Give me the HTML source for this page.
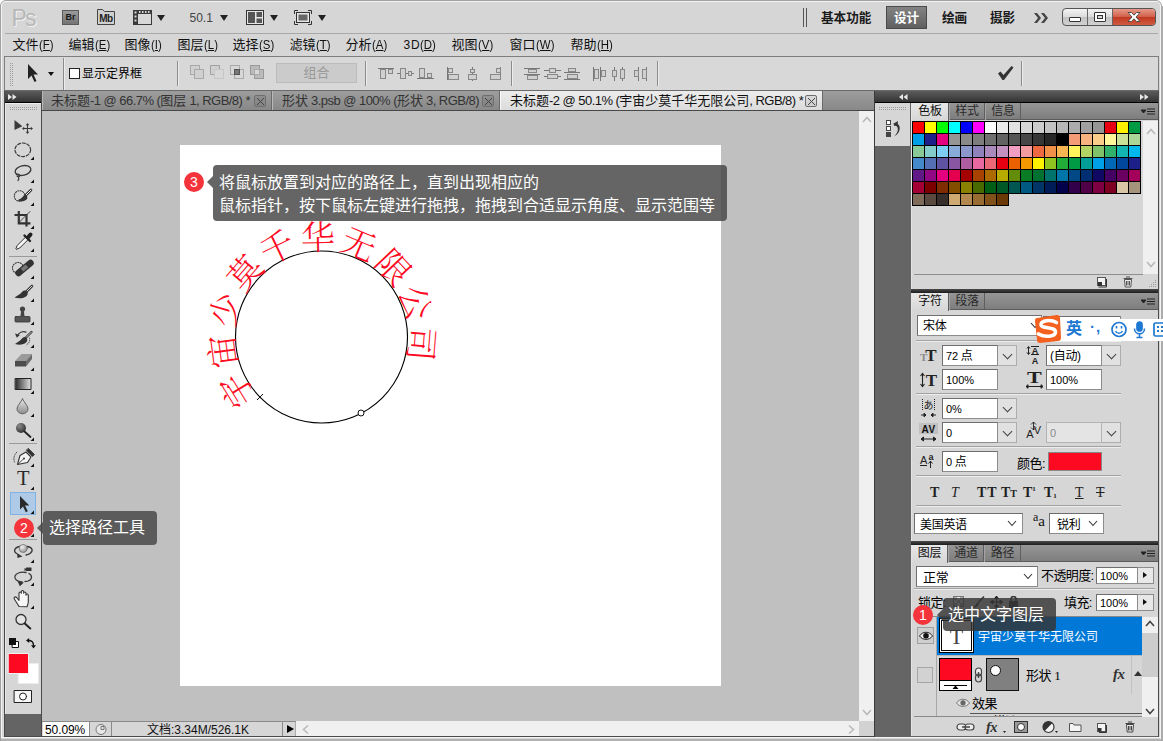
<!DOCTYPE html>
<html lang="zh-CN">
<head>
<meta charset="utf-8">
<title>Photoshop</title>
<style>
*{box-sizing:border-box;margin:0;padding:0}
html,body{width:1163px;height:741px;overflow:hidden;background:#d6d6d6}
body{font-family:"Liberation Sans","Noto Sans CJK SC",sans-serif;font-size:12px;color:#000;position:relative}
.abs{position:absolute}
#root{position:absolute;left:0;top:0;width:1163px;height:741px;overflow:hidden;background:#d6d6d6}
#appbar{left:0;top:0;width:1163px;height:33px}
.tri{position:absolute;width:0;height:0;border:4px solid transparent;border-top:6px solid #222;border-bottom:0}
.ws{position:absolute;top:8.500px;font-size:12.600px;font-weight:bold;line-height:18px;color:#1a1a1a;white-space:nowrap;letter-spacing:0}
#menubar{left:5px;top:33px;width:1153px;height:23px;border-top:1px solid #a8a8a8}
.menu{position:absolute;top:2px;font-size:13px;line-height:18px;color:#111;white-space:nowrap}
.menu u{text-decoration:underline}
.menu b{font-weight:normal;display:inline-block;transform:scaleX(0.880);transform-origin:left center;margin-right:-2px}
#menubar .menu{margin-left:-5.500px}
#optbar{left:4px;top:56px;width:1155px;height:35px;background:#d8d8d8;border:1px solid #7e7e7e;border-bottom:1px solid #6a6a6a}
.vsep{position:absolute;width:2px;border-left:1px solid #8c8c8c;border-right:1px solid #ececec}
.grip{background:linear-gradient(90deg,#9a9a9a 50%,transparent 50%) 0 0/2px 2px;-webkit-mask:linear-gradient(#000 50%,transparent 50%) 0 0/2px 2px;mask:linear-gradient(#000 50%,transparent 50%) 0 0/2px 2px}
.tab{position:absolute;top:0;height:19px;border-right:1px solid #6a6a6a;border-left:1px solid #b8b8b8;font-size:13px;color:#333;white-space:nowrap}
.tab span{position:absolute;top:0;line-height:19px;letter-spacing:-0.54px}
.tab em{font-style:normal;letter-spacing:0}
.tab i{position:absolute;top:4px;width:12px;height:12px;border:1px solid #6e6e6e;border-radius:2px;background-color:rgba(0,0,0,0.060);background-image:
 linear-gradient(45deg,transparent 44%,#444 44%,#444 56%,transparent 56%),linear-gradient(-45deg,transparent 44%,#444 44%,#444 56%,transparent 56%);background-size:7px 7px;background-position:center;background-repeat:no-repeat}
.tab.act{background:linear-gradient(#ececec,#dcdcdc);height:19px;color:#111;border-left:1px solid #f8f8f8}
.panel{background:#d6d6d6;border-left:1px solid #e6e6e6}
.ptabs{position:absolute;left:0;top:0;right:0;height:17px;background:linear-gradient(#969696,#7e7e7e);border-bottom:1px solid #5c5c5c}
.ptab{position:absolute;top:0;height:17px;font-size:12px;line-height:17px;text-align:center;color:#2a2a2a;border-right:1px solid #5e5e5e;border-left:1px solid #a4a4a4;letter-spacing:-0.3px;white-space:nowrap}
.ptab.act{background:linear-gradient(#e8e8e8,#d6d6d6);height:18px;color:#111;border-left:0}
.fld{position:absolute;background:#fff;border:1px solid #8c8c8c;border-top-color:#6e6e6e;border-left-color:#6e6e6e;font-size:12px;color:#000;white-space:nowrap}
.fld span{position:absolute;top:1px;line-height:19px;letter-spacing:-0.3px}
.fld b{font-weight:normal;font-size:11px;letter-spacing:0;word-spacing:-0.500px}
.fld.dis{background:#e4e4e4;color:#8a8a8a;border-color:#b4b4b4}
.dd{position:absolute;width:19px;height:21px;background:#e1e1e1;border:1px solid #adadad;border-left:0}
.dd:after{content:"";position:absolute;left:6px;top:5px;width:6px;height:6px;border-right:1px solid #444;border-bottom:1px solid #444;transform:rotate(45deg) scale(1,1);transform-origin:center}
.hsep{position:absolute;height:2px;border-top:1px solid #a2a2a2;border-bottom:1px solid #ededed}
.tsty{top:192px;font-family:"Liberation Serif",serif;font-size:14px;line-height:16px;color:#222;white-space:nowrap}
.abtn{position:absolute;width:16px;height:17px;background:#e8e8e8;border:1px solid #8c8c8c;border-left:0}
.abtn:after{content:"";position:absolute;left:5px;top:4px;width:0;height:0;border:3.500px solid transparent;border-left:4.500px solid #111;border-right:0}
.tip{position:absolute;background:rgba(72,72,72,0.840);color:#fff;font-size:16px;border-radius:4px;white-space:nowrap}
.tiparrow{position:absolute;width:0;height:0;border:6px solid transparent;border-right:6px solid rgba(72,72,72,0.840);border-left:0}
.badge{position:absolute;width:20px;height:20px;border-radius:50%;background:#f5333b;color:#fff;font-size:14px;line-height:20px;text-align:center}
</style>
</head>
<body>
<div id="root">
<!-- ===== APP BAR ===== -->
<div class="abs" id="appbar">
  <div class="abs" style="left:11.500px;top:3.500px;font-size:23px;letter-spacing:-1.800px;color:#b8b8b8;text-shadow:1px 1px 0 #f2f2f2;font-family:'Liberation Sans',sans-serif;line-height:28px">Ps</div>
  <!-- Br -->
  <div class="abs" style="left:62px;top:10px;width:17px;height:15px;background:linear-gradient(#9a9a9a,#747474);border:1px solid #5a5a5a;color:#1a1a1a;font-size:9px;font-weight:bold;line-height:13px;text-align:center">Br</div>
  <!-- Mb -->
  <svg class="abs" style="left:96px;top:8px" width="20" height="18" viewBox="0 0 20 18"><path d="M1.5 16.5V1.5H6.5L8.5 3.5H18.5V16.5Z" fill="#d0d0d0" stroke="#444" stroke-width="1"/><text x="10" y="14" font-size="10" font-weight="bold" letter-spacing="-0.5" text-anchor="middle" fill="#222" font-family="Liberation Sans, sans-serif">Mb</text></svg>
  <!-- film -->
  <svg class="abs" style="left:132px;top:9px" width="21" height="17" viewBox="0 0 21 17"><rect x="1" y="1" width="19" height="15" fill="#3a3a3a"/><rect x="6" y="5" width="13" height="10" fill="#d8d8d8"/><g fill="#d8d8d8"><rect x="2.5" y="2.5" width="2" height="2"/><rect x="2.5" y="6.5" width="2" height="2"/><rect x="2.5" y="10.5" width="2" height="2"/><rect x="7" y="2" width="1.5" height="2"/><rect x="10" y="2" width="1.5" height="2"/><rect x="13" y="2" width="1.5" height="2"/><rect x="16" y="2" width="1.5" height="2"/></g></svg>
  <div class="tri" style="left:157px;top:15px"></div>
  <div class="abs" style="left:189.500px;top:11px;font-size:12px;color:#444;line-height:15px">50.1</div>
  <div class="tri" style="left:220px;top:15px"></div>
  <!-- layout icon -->
  <svg class="abs" style="left:245px;top:9px" width="20" height="17" viewBox="0 0 20 17"><rect x="1.5" y="1.5" width="17" height="14" fill="#e6e6e6" stroke="#333"/><rect x="3" y="3" width="7" height="11" fill="#555"/><rect x="11.5" y="3" width="5.5" height="5" fill="#555"/><rect x="11.5" y="9.5" width="5.5" height="4.5" fill="#555"/></svg>
  <div class="tri" style="left:270px;top:15px"></div>
  <!-- screen icon -->
  <svg class="abs" style="left:293px;top:9px" width="20" height="17" viewBox="0 0 20 17"><path d="M1.5 5V1.5H5M15 1.5H18.5V5M18.5 12V15.5H15M5 15.5H1.5V12" fill="none" stroke="#333" stroke-width="1"/><rect x="3.5" y="3.5" width="13" height="10" fill="#e6e6e6" stroke="#333"/><rect x="5.5" y="5.5" width="9" height="6" fill="#666"/></svg>
  <div class="tri" style="left:318px;top:15px"></div>

  <div class="abs" style="left:803px;top:8px;width:1px;height:19px;background:#555"></div>
  <div class="abs" style="left:806px;top:8px;width:1px;height:19px;background:#555"></div>
  <div class="ws" style="left:821px">基本功能</div>
  <div class="abs" style="left:886px;top:6px;width:41px;height:23px;background:linear-gradient(#838383,#606060);border:1px solid #4a4a4a"></div>
  <div class="ws" style="left:894px;color:#fff">设计</div>
  <div class="ws" style="left:942px">绘画</div>
  <div class="ws" style="left:990px">摄影</div>
  <svg class="abs" style="left:1033px;top:12px" width="16" height="12" viewBox="0 0 16 12"><path d="M1 1H4L8 6L4 11H1L5 6Z M8 1H11L15 6L11 11H8L12 6Z" fill="#444"/></svg>
  <!-- window buttons -->
  <div class="abs" style="left:1062px;top:8px;width:94px;height:18px;border:1px solid #555;border-radius:4px;background:linear-gradient(#f4f4f4 0%,#dcdcdc 48%,#c2c2c2 52%,#d2d2d2 100%);overflow:hidden">
    <div class="abs" style="left:24px;top:0;width:1px;height:16px;background:#666"></div>
    <div class="abs" style="left:49px;top:0;width:43px;height:16px;border-left:1px solid #666;background:linear-gradient(#e59a8a 0%,#d2604a 48%,#c03a22 52%,#cf5a40 100%)"></div>
    <div class="abs" style="left:6px;top:8px;width:12px;height:5px;background:#fff;border:1px solid #333;border-radius:1px"></div>
    <div class="abs" style="left:31px;top:3px;width:12px;height:10px;background:#fff;border:1px solid #333;border-radius:1px"></div>
    <div class="abs" style="left:34px;top:6px;width:6px;height:4px;background:#ddd;border:1px solid #333"></div>
    <svg class="abs" style="left:63px;top:2px" width="16" height="12" viewBox="0 0 16 12"><path d="M2 1.5H5.5L8 4.2L10.5 1.5H14L10 6L14 10.5H10.5L8 7.8L5.5 10.5H2L6 6Z" fill="#fff" stroke="#444" stroke-width="0.9"/></svg>
  </div>
</div>
<!-- ===== MENU BAR ===== -->
<div class="abs" id="menubar">
  <div class="menu" style="left:13px">文件<b>(<u>F</u>)</b></div>
  <div class="menu" style="left:69px">编辑<b>(<u>E</u>)</b></div>
  <div class="menu" style="left:125px">图像<b>(<u>I</u>)</b></div>
  <div class="menu" style="left:178px">图层<b>(<u>L</u>)</b></div>
  <div class="menu" style="left:233px">选择<b>(<u>S</u>)</b></div>
  <div class="menu" style="left:290px">滤镜<b>(<u>T</u>)</b></div>
  <div class="menu" style="left:346px">分析<b>(<u>A</u>)</b></div>
  <div class="menu" style="left:404px"><b style="transform:none;margin-right:0;letter-spacing:0.800px;font-size:12px">3D</b><b>(<u>D</u>)</b></div>
  <div class="menu" style="left:452px">视图<b>(<u>V</u>)</b></div>
  <div class="menu" style="left:510px">窗口<b>(<u>W</u>)</b></div>
  <div class="menu" style="left:571px">帮助<b>(<u>H</u>)</b></div>
</div>
<!-- ===== OPTIONS BAR ===== -->
<div class="abs" id="optbar"><div class="abs" style="left:1px;top:0;width:0;height:0">
  <div class="abs grip" style="left:4px;top:6px;width:3px;height:23px"></div>
  <svg class="abs" style="left:20px;top:6px" width="14" height="20" viewBox="0 0 14 20"><path d="M2 1V16L5.5 12.5L8.5 19L10.5 18L7.5 11.5H12Z" fill="#222"/></svg>
  <div class="abs" style="left:42px;top:15px;border:3px solid transparent;border-top:4px solid #111;border-bottom:0;width:0;height:0"></div>
  <div class="vsep" style="left:57px;top:1px;height:32px"></div>
  <div class="abs" style="left:63px;top:11px;width:11px;height:11px;background:#fff;border:1px solid #222"></div>
  <div class="abs" style="left:76px;top:9px;font-size:12px;line-height:16px;color:#000;white-space:nowrap">显示定界框</div>
  <div class="vsep" style="left:171px;top:4px;height:25px"></div>
  <!-- pathfinder icons -->
  <svg class="abs" style="left:184px;top:8px" width="15" height="15" viewBox="0 0 15 15"><rect x=".5" y=".5" width="9" height="9" fill="#d0d0d0" stroke="#a8a8a8"/><rect x="4.5" y="4.5" width="9" height="9" fill="#d0d0d0" stroke="#a8a8a8"/></svg>
  <svg class="abs" style="left:204px;top:8px" width="15" height="15" viewBox="0 0 15 15"><path d="M.5 .5H9.5V4.5H4.5V9.5H.5Z" fill="#d0d0d0" stroke="#a0a0a0"/><rect x="4.5" y="4.5" width="9" height="9" fill="none" stroke="#c6c6c6"/></svg>
  <svg class="abs" style="left:224px;top:8px" width="15" height="15" viewBox="0 0 15 15"><rect x=".5" y=".5" width="9" height="9" fill="none" stroke="#aaa"/><rect x="4.5" y="4.5" width="9" height="9" fill="none" stroke="#aaa"/><rect x="4.5" y="4.5" width="5" height="5" fill="#777" stroke="#555"/></svg>
  <svg class="abs" style="left:244px;top:8px" width="15" height="15" viewBox="0 0 15 15"><rect x=".5" y=".5" width="9" height="9" fill="#bbb" stroke="#999"/><rect x="4.5" y="4.5" width="9" height="9" fill="#bbb" stroke="#999"/><rect x="4.5" y="4.5" width="5" height="5" fill="#d8d8d8" stroke="#aaa"/></svg>
  <div class="abs" style="left:270px;top:6px;width:81px;height:20px;background:#cbcbcb;border:1px solid #bcbcbc;color:#999;font-size:13px;line-height:18px;text-align:center">组合</div>
  <div class="vsep" style="left:359px;top:4px;height:25px"></div>
  <!-- align icons -->
  <svg class="abs" style="left:372px;top:10px" width="130" height="14" viewBox="0 0 130 14" fill="#d0d0d0" stroke="#888">
    <path d="M0 1.5H16" stroke="#777"/><rect x="2.500" y="2.500" width="5" height="9"/><rect x="10.500" y="2.500" width="4" height="4"/>
    <path d="M19 6.500H36" stroke="#777"/><rect x="22.500" y="1.500" width="5" height="10"/><rect x="30.500" y="4.500" width="3" height="4"/>
    <path d="M39 11.500H56" stroke="#777"/><rect x="41.500" y="1.500" width="5" height="9"/><rect x="49.500" y="6.500" width="4" height="4"/>
    <path d="M69.500 0V13" stroke="#777"/><rect x="70.500" y="1.500" width="4" height="4"/><rect x="70.500" y="7.500" width="10" height="5"/>
    <path d="M94.500 0V14" stroke="#777"/><rect x="92.500" y="2.500" width="4" height="3"/><rect x="90.500" y="7.500" width="8" height="5"/>
    <path d="M122.500 0V13" stroke="#777"/><rect x="118.500" y="1.500" width="4" height="4"/><rect x="112.500" y="7.500" width="10" height="5"/>
  </svg>
  <div class="vsep" style="left:505px;top:4px;height:25px"></div>
  <svg class="abs" style="left:518px;top:10px" width="126" height="14" viewBox="0 0 126 14" fill="#d0d0d0" stroke="#888">
    <path d="M0 1.500H16M0 7.500H16" stroke="#777"/><rect x="4.500" y="2.500" width="8" height="3"/><rect x="3.500" y="8.500" width="10" height="4"/>
    <path d="M20 3.500H37M20 9.500H37" stroke="#777"/><rect x="25.500" y="1.500" width="6" height="4"/><rect x="23.500" y="7.500" width="10" height="4"/>
    <path d="M40 5.500H56M40 12.500H56" stroke="#777"/><rect x="44.500" y="1.500" width="7" height="3"/><rect x="43.500" y="7.500" width="10" height="4"/>
    <path d="M69.500 0V14M76.500 0V14" stroke="#777"/><rect x="70.500" y="2.500" width="4" height="9"/><rect x="77.500" y="3.500" width="4" height="6"/>
    <path d="M90.500 0V14M98.500 0V14" stroke="#777"/><rect x="88.500" y="3.500" width="4" height="6"/><rect x="96.500" y="2.500" width="4" height="9"/>
    <path d="M114.500 0V14M122.500 0V14" stroke="#777"/><rect x="110.500" y="3.500" width="4" height="6"/><rect x="118.500" y="2.500" width="4" height="9"/>
  </svg>
  <div class="vsep" style="left:651px;top:4px;height:25px"></div>
  <svg class="abs" style="left:991px;top:8px" width="18" height="16" viewBox="0 0 18 16"><path d="M1 8.500L3.500 6.500L6.500 10L14.500 1L16.500 2.500L7 15H5.500Z" fill="#333"/></svg>
  <div class="vsep" style="left:1015px;top:4px;height:25px"></div>
</div></div>
<!-- ===== TOOLBAR ===== -->
<div class="abs" style="left:4px;top:91px;width:38px;height:646px;background:#646464;border-left:1px solid #4a4a4a;border-right:1px solid #4a4a4a"></div>
<div class="abs" style="left:5px;top:91px;width:36px;height:12px;background:linear-gradient(#5c5c5c,#343434);border-bottom:1px solid #000"></div>
<svg class="abs" style="left:8px;top:94px" width="9" height="6" viewBox="0 0 9 6"><path d="M0 0L4 3L0 6ZM4.500 0L8.500 3L4.500 6Z" fill="#e8e8e8"/></svg>
<div class="abs" id="toolbar" style="left:5px;top:103px;width:36px;height:611px;background:#d6d6d6;border-top:1px solid #eee;border-left:1px solid #e8e8e8">
  <div class="abs grip" style="left:4px;top:3px;width:28px;height:4px"></div>
  <div class="abs" style="left:3px;top:152px;width:28px;height:1px;background:#9a9a9a"></div>
  <div class="abs" style="left:3px;top:339px;width:28px;height:1px;background:#9a9a9a"></div>
  <div class="abs" style="left:3px;top:435px;width:28px;height:1px;background:#9a9a9a"></div>
  <div class="abs" style="left:4px;top:388px;width:26px;height:23px;background:#aecae6;border:1px solid #7fb2e6"></div>
</div>
<!-- tool icons (absolute page coords) -->
<svg class="abs" style="left:5px;top:102px" width="36" height="612" viewBox="5 102 36 612" fill="none" stroke="#3a3a3a" stroke-width="1.300" stroke-linecap="round" stroke-linejoin="round">
  <defs>
    <linearGradient id="gr1" x1="0" x2="1"><stop offset="0" stop-color="#2e2e2e"/><stop offset="1" stop-color="#e4e4e4"/></linearGradient>
    <radialGradient id="sph" cx="0.350" cy="0.300" r="0.800"><stop offset="0" stop-color="#f4f4f4"/><stop offset="1" stop-color="#8a8a8a"/></radialGradient>
    <radialGradient id="dg" cx="0.350" cy="0.300" r="0.800"><stop offset="0" stop-color="#8a8a8a"/><stop offset="1" stop-color="#2a2a2a"/></radialGradient>
    <linearGradient id="drop" x1="0" x2="0" y1="0" y2="1"><stop offset="0" stop-color="#e8e8e8"/><stop offset="1" stop-color="#8c8c8c"/></linearGradient>
  </defs>
  <g fill="#111" stroke="none"><path d="M34 160v-3.500l-3.500 3.500z M34 183v-3.500l-3.500 3.500z M34 206v-3.500l-3.500 3.500z M34 229v-3.500l-3.500 3.500z M34 252v-3.500l-3.500 3.500z M34 279v-3.500l-3.500 3.500z M34 302v-3.500l-3.500 3.500z M34 325v-3.500l-3.500 3.500z M34 348v-3.500l-3.500 3.500z M34 371v-3.500l-3.500 3.500z M34 394v-3.500l-3.500 3.500z M34 417v-3.500l-3.500 3.500z M34 441v-3.500l-3.500 3.500z M34 467v-3.500l-3.500 3.500z M34 490v-3.500l-3.500 3.500z M34 514v-3.500l-3.500 3.500z M34 537v-3.500l-3.500 3.500z M34 563v-3.500l-3.500 3.500z M34 586v-3.500l-3.500 3.500z M34 609v-3.500l-3.500 3.500z "/></g>
  <!-- move -->
  <path d="M14.500 120V130L22.300 126.300Z" fill="#3a3a3a" stroke="none"/>
  <path d="M27.500 124.500v8M23.500 128.500h8" stroke-width="1.100"/><path d="M27.500 123l-1.800 2.200h3.600zM27.500 134l-1.800-2.200h3.600zM22 128.500l2.200-1.800v3.600zM33 128.500l-2.200-1.800v3.600z" fill="#3a3a3a" stroke="none"/>
  <!-- marquee ellipse -->
  <ellipse cx="22.800" cy="149.800" rx="7.800" ry="6.800" stroke-dasharray="3 1.800" stroke-width="1.200"/>
  <!-- lasso -->
  <ellipse cx="23" cy="170.500" rx="8" ry="4.800" transform="rotate(-14 23 170.500)" stroke-width="1.400"/>
  <path d="M16.500 174.500c1.500-1 3.500 0 3 1.500c-.3 1-2 1-2.500 0M18.500 177.500c.5 1 .5 2-.5 3" stroke-width="1.200"/>
  <!-- quick select -->
  <circle cx="19.600" cy="196" r="5.300" stroke-dasharray="1.100 1.400" stroke-width="1.100"/>
  <path d="M31 190l-5 5" stroke="#333" stroke-width="2.600"/><path d="M31 190l-5 5" stroke="#f0f0f0" stroke-width="1"/>
  <path d="M17.500 200.500C19.500 199 21.500 198.500 23 196.500C24 195 25.500 194.800 26.500 195.500C28 196.800 27.500 198.800 26 200C23.500 201.800 20 201.500 17.500 200.500Z" fill="#333" stroke="none"/>
  <!-- crop -->
  <path d="M18.800 211v12.300h11.700M14.500 215h12v11.500" stroke="#333" stroke-width="2.200" stroke-linecap="butt" stroke-linejoin="miter"/><path d="M30 211.500L19.500 222" stroke-width="0.900"/>
  <!-- eyedropper -->
  <path d="M16 248.500l1.200-3l8.300-8.300l2.500 2.500l-8.300 8.300l-3 1.200z" fill="#f6f6f6" stroke="#333" stroke-width="1"/>
  <path d="M24.500 235.500l5.500 5.500" stroke="#222" stroke-width="2.400"/><path d="M28 237.500l2.500-3" stroke="#222" stroke-width="4"/>
  <!-- healing -->
  <circle cx="18" cy="268" r="5.500" stroke-dasharray="1.100 1.400" stroke-width="1.100"/>
  <path d="M18.500 273l12-10" stroke="#333" stroke-width="6.500"/><path d="M22 270l5-4" stroke="#777" stroke-width="4" stroke-linecap="butt"/>
  <!-- brush -->
  <path d="M32 286l-6 6" stroke="#333" stroke-width="2.600"/><path d="M32 286l-6 6" stroke="#eaeaea" stroke-width="0.900"/>
  <path d="M14.500 297.500C17 295.500 20 294.500 22 292C23 290.500 25 290 26.500 291C28.500 292.500 28 295 26 296.500C22.500 299 17.500 298.500 14.500 297.500Z" fill="#333" stroke="none"/>
  <!-- stamp -->
  <circle cx="22.500" cy="309" r="2.600" fill="#444" stroke="none"/><path d="M21.300 310h2.400l.8 6h-4z" fill="#444" stroke="none"/><rect x="15" y="316.500" width="15" height="5.500" rx="0.800" fill="#555" stroke="#333" stroke-width="0.800"/>
  <!-- history brush -->
  <path d="M31.500 332l-5.500 5.500" stroke="#333" stroke-width="2.400"/><path d="M31.500 332l-5.500 5.500" stroke="#eaeaea" stroke-width="0.800"/>
  <path d="M15 344C17.500 342 20 341 22 338.500C23 337 25 336.500 26.300 337.500C28 339 27.500 341.500 25.500 343C22.500 345.200 18 345 15 344Z" fill="#333" stroke="none"/>
  <path d="M17.500 335.500c1.500-3 5-4.500 8.500-3.500" stroke-width="1.300"/><path d="M15 333.500l1.800 4.200l3-2.800z" fill="#333" stroke="none"/>
  <path d="M29.500 338c.8 2.500-.5 5-2.500 6.500" stroke-dasharray="0.800 1.400" stroke-width="0.900"/>
  <!-- eraser -->
  <path d="M15 361l6.500-7h10.500l-6 7z" fill="#9a9a9a" stroke="none"/><path d="M15 361h11v5.500h-11z" fill="#4c4c4c" stroke="none"/><path d="M26 361l6-7v5l-6 7.500z" fill="#6a6a6a" stroke="none"/>
  <!-- gradient -->
  <rect x="15.500" y="378.500" width="15.500" height="11" fill="url(#gr1)" stroke="#222" stroke-width="1"/>
  <!-- blur drop -->
  <path d="M22.500 399c-2.500 4.500-5.500 7-5.500 9.800a5.500 5 0 0 0 11 0c0-2.800-3-5.300-5.500-9.800z" fill="url(#drop)" stroke="#555" stroke-width="0.900"/>
  <!-- dodge -->
  <circle cx="21" cy="428" r="5" fill="url(#dg)" stroke="none"/><path d="M24.500 431.500l6 5.500" stroke="#222" stroke-width="1.800"/>
  <!-- pen -->
  <path d="M14.500 462c-1.500-4 0-8 3-10.500" stroke-dasharray="1 1.400" stroke-width="0.900"/>
  <path d="M17.500 464.500l2.500-9l6-3.500l5 5l-3.500 5.500z" fill="#f4f4f4" stroke="#333" stroke-width="1.100"/><path d="M17.500 464.500l6-5.500" stroke-width="0.900"/><circle cx="24" cy="458.500" r="1" fill="#333" stroke="none"/>
  <path d="M26.500 450.500l6 6l2-2l-6-6z" fill="#333" stroke="#333" stroke-width="0.800"/>
  <!-- T -->
  <text x="23.200" y="485.300" font-family="Liberation Serif, serif" font-size="20.500" text-anchor="middle" fill="#2a2a2a" stroke="none">T</text>
  <!-- path selection -->
  <path d="M20 496V509.500L23 506.500L25.800 512.200L27.800 511.200L25 505.500H29.300Z" fill="#2a2a2a" stroke="none"/>
  <!-- 3D rotate -->
  <path d="M19.500 546.500c-5 1-6.500 4.500-3 7M27 546.500c5 .5 7 4 3 7c-1 .8-2.500 1.300-4 1.500" stroke-width="1.300"/>
  <circle cx="23.200" cy="548.500" r="4" fill="url(#sph)" stroke="#666" stroke-width="0.700"/>
  <path d="M22.500 556.500l-5.500-3.500l.5 5z" fill="#333" stroke="none"/>
  <!-- 3D orbit -->
  <path d="M29 573.500c3.500 2 3.500 6-1 7.500c-1 .3-2 .5-3 .5M22 582c-5-.5-8-3-7-6c1-3 6-4.500 11-3.500" stroke-width="1.300"/>
  <path d="M23.500 583.500l-5.500-3l.5 5z" fill="#333" stroke="none" transform="rotate(-20 21 582)"/>
  <rect x="26" y="567.500" width="5.500" height="3.500" rx="0.500" fill="#333" stroke="none"/><path d="M24.500 568l1.500 .8v1.500l-1.500 .8z" fill="#333" stroke="none"/>
  <!-- hand -->
  <path d="M19 606.500c-1-2-3.500-5.500-4.700-7.500c-.9-1.500 1-2.800 2.300-1.500l2.400 2.800v-7c0-1.800 2.300-1.800 2.300 0v-1.500c0-1.800 2.400-1.800 2.400 0v1.500c0-1.700 2.300-1.700 2.300 0v2c0-1.700 2.300-1.700 2.300 0v6.500c0 2-.8 3.500-1.300 5z" fill="#f6f6f6" stroke="#333" stroke-width="1.100"/>
  <!-- zoom -->
  <circle cx="21" cy="619.500" r="5" fill="#e4e4e4" stroke="#333" stroke-width="1.300"/><path d="M24.800 623.500l5.500 5" stroke="#222" stroke-width="2"/>
  <!-- default colors / swap -->
  <rect x="12.500" y="641.500" width="6" height="6" fill="#fff" stroke="#111" stroke-width="1"/><rect x="9" y="638" width="7" height="7" fill="#111" stroke="none"/>
  <path d="M28.500 640.500c3.500 0 5 1.500 5 5" stroke="#111" stroke-width="1.300"/><path d="M26 640.500l3.200-2.500v5zM33.500 648.500l-2.500-3.200h5z" fill="#111" stroke="none"/>
  <!-- bg / fg -->
  <rect x="18.500" y="663.500" width="20" height="20" fill="#fff" stroke="#ececec" stroke-width="1"/>
  <rect x="8.500" y="653.500" width="20" height="20" fill="#fd0a22" stroke="#f0f0f0" stroke-width="1"/>
  <!-- quick mask -->
  <rect x="14.500" y="690.500" width="17" height="12" fill="#f6f6f6" stroke="#222" stroke-width="1"/><circle cx="23" cy="696.500" r="3.500" fill="#fff" stroke="#222" stroke-width="1"/>
</svg>

<!-- ===== TAB BAR ===== -->
<div class="abs" id="tabbar" style="left:42px;top:91px;width:832px;height:20px;background:linear-gradient(#9d9d9d,#888888);border-bottom:1px solid #484848">
  <div class="tab" style="left:0;width:230px"><span style="left:8px"><em>未标题</em>-1 @ 66.7% (<em>图层</em> 1, RGB/8) *</span><i style="left:211px"></i></div>
  <div class="tab" style="left:230px;width:228px"><span style="left:9px"><em>形状</em> 3.psb @ 100% (<em>形状</em> 3, RGB/8)</span><i style="left:209px"></i></div>
  <div class="tab act" style="left:458px;width:323px"><span style="left:9px"><em>未标题</em>-2 @ 50.1% (<em>宇宙少莫千华无限公司</em>, RGB/8) *</span><i style="left:304px"></i></div>
</div>

<!-- ===== CANVAS ===== -->
<div class="abs" id="canvas" style="left:42px;top:111px;width:817px;height:610px;background:#c0c0c0;overflow:hidden"></div>
<div class="abs" id="doc" style="left:180px;top:145px;width:541px;height:541px;background:#fff"></div>
<svg class="abs" style="left:180px;top:145px" width="541" height="541" viewBox="180 145 541 541">
  <circle cx="321.500" cy="337" r="86" fill="none" stroke="#000" stroke-width="1.150"/>
  <path id="tp" d="M 259.950 397.060 A 86 86 0 1 1 321.500 423 A 86 86 0 0 1 259.950 397.060" fill="none"/>
  <text font-family="'Liberation Serif','Noto Serif CJK SC',serif" font-size="34" font-weight="300" letter-spacing="2" fill="#fd0a22"><textPath href="#tp" startOffset="1"><tspan dy="-1.500">宇宙少莫千华无限公司</tspan></textPath></text>
  <path d="M257 394l6 6M263 394l-6 6" stroke="#111" stroke-width="1"/>
  <circle cx="361" cy="413" r="3" fill="#fff" stroke="#111" stroke-width="1"/>
</svg>
<!-- vertical scrollbar -->
<div class="abs" style="left:859px;top:111px;width:15px;height:610px;background:#f0f0f0"></div>
<svg class="abs" style="left:862px;top:116px" width="10" height="7" viewBox="0 0 10 7"><path d="M1 6L5 1.500L9 6" fill="none" stroke="#b8b8b8" stroke-width="1.500"/></svg>
<svg class="abs" style="left:862px;top:709px" width="10" height="7" viewBox="0 0 10 7"><path d="M1 1L5 5.500L9 1" fill="none" stroke="#b8b8b8" stroke-width="1.500"/></svg>
<!-- status bar -->
<div class="abs" style="left:42px;top:721px;width:817px;height:15px;background:#d6d6d6;border-top:1px solid #8a8a8a"></div>
<div class="abs" style="left:43px;top:722px;width:47px;height:14px;background:#fff;border-right:1px solid #8a8a8a;font-size:12px;line-height:14px;padding-left:2px;padding-top:1px;color:#000;letter-spacing:-0.1px">50.09%</div>
<div class="abs" style="left:91px;top:722px;width:21px;height:14px;border-right:1px solid #8a8a8a"></div>
<svg class="abs" style="left:94px;top:723px" width="14" height="13" viewBox="0 0 14 13"><circle cx="7" cy="6.500" r="5" fill="#e8e8e8" stroke="#777"/><path d="M7 6.500V3.500H10V6.500Z" fill="none" stroke="#777" stroke-width="1"/></svg>
<div class="abs" style="left:112px;top:722px;width:171px;height:14px;border-right:1px solid #8a8a8a;font-size:12px;line-height:14px;text-align:center;color:#111;padding-left:2px;padding-top:1px;white-space:nowrap">文档:3.34M/526.1K</div>
<div class="abs" style="left:283px;top:722px;width:13px;height:14px;border-right:1px solid #aaa"></div>
<div class="abs" style="left:287px;top:725px;width:0;height:0;border:4.500px solid transparent;border-left:7px solid #000;border-right:0"></div>
<div class="abs" style="left:296px;top:721px;width:563px;height:15px;background:#f0f0f0"></div>
<svg class="abs" style="left:302px;top:725px" width="7" height="9" viewBox="0 0 7 9"><path d="M6 .5L1.500 4.500L6 8.500" fill="none" stroke="#b8b8b8" stroke-width="1.500"/></svg>
<svg class="abs" style="left:848px;top:725px" width="7" height="9" viewBox="0 0 7 9"><path d="M1 .5L5.500 4.500L1 8.500" fill="none" stroke="#b8b8b8" stroke-width="1.500"/></svg>
<div class="abs" style="left:859px;top:721px;width:15px;height:15px;background:#d2d2d2"></div>
<!-- bottom line -->
<div class="abs" style="left:4px;top:736px;width:1155px;height:1px;background:#4a4a4a"></div>
<div class="abs" style="left:0;top:737px;width:1163px;height:4px;background:#d6d6d6;border-bottom:1px solid #9a9a9a"></div>
<!-- ===== RIGHT DOCK ===== -->
<div class="abs" style="left:874px;top:91px;width:284px;height:646px;background:#656565;border-left:1px solid #3a3a3a"></div>
<div class="abs" style="left:875px;top:91px;width:283px;height:12px;background:linear-gradient(#5c5c5c,#343434);border-bottom:1px solid #000"></div>
<svg class="abs" style="left:899px;top:94px" width="9" height="6" viewBox="0 0 9 6"><path d="M4 0L0 3L4 6ZM8.500 0L4.500 3L8.500 6Z" fill="#e8e8e8"/></svg>
<svg class="abs" style="left:1140px;top:94px" width="9" height="6" viewBox="0 0 9 6"><path d="M0 0L4 3L0 6ZM4.500 0L8.500 3L4.500 6Z" fill="#e8e8e8"/></svg>
<div class="abs" style="left:911px;top:289px;width:247px;height:4px;background:linear-gradient(#4a4a4a,#1c1c1c)"></div>
<div class="abs" style="left:911px;top:541px;width:247px;height:4px;background:linear-gradient(#4a4a4a,#1c1c1c)"></div>
<!-- collapsed icon column -->
<div class="abs" style="left:875px;top:103px;width:35px;height:43px;background:#d6d6d6"></div>
<div class="abs grip" style="left:879px;top:107px;width:28px;height:4px"></div>
<svg class="abs" style="left:885px;top:119px" width="18" height="20" viewBox="0 0 18 20"><rect x="1.500" y="1.500" width="4" height="4" fill="#fff" stroke="#444"/><rect x="1.500" y="7.500" width="4" height="4" fill="#fff" stroke="#444"/><rect x="1" y="13" width="5" height="5" fill="#444"/><path d="M9 4.500c5-1 7 4 5 8c-1 2-2.500 3.500-4.500 4.500c3-3 4-6 3-8.500c-.5-1.500-2-2-3.500-1.500z" fill="#333"/><path d="M8 5l5-3l-.5 5z" fill="#333"/></svg>

<!-- ===== SWATCHES PANEL ===== -->
<div class="abs panel" style="left:911px;top:103px;width:247px;height:186px">
  <div class="ptabs"><div class="ptab act" style="left:0;width:37px">色板</div><div class="ptab" style="left:37px;width:36px">样式</div><div class="ptab" style="left:73px;width:36px">信息</div>
    <svg class="abs" style="left:229px;top:5px" width="14" height="8" viewBox="0 0 14 8"><path d="M0 2h5l-2.500 3zM6 1h8M6 3.500h8M6 6h8" fill="#222" stroke="#222" stroke-width="1"/></svg>
  </div>
  <div class="abs" style="left:231px;top:18px;width:16px;height:153px;background:#f0f0f0"></div>
  <svg class="abs" style="left:234px;top:25px" width="10" height="7" viewBox="0 0 10 7"><path d="M1 6L5 1.500L9 6" fill="none" stroke="#b8b8b8" stroke-width="1.500"/></svg>
  <svg class="abs" style="left:234px;top:158px" width="10" height="7" viewBox="0 0 10 7"><path d="M1 1L5 5.500L9 1" fill="none" stroke="#b8b8b8" stroke-width="1.500"/></svg>
  <div class="abs" style="left:2px;top:171px;width:229px;height:1px;background:#8e8e8e"></div>
  <svg class="abs" style="left:184px;top:173px" width="12" height="12" viewBox="0 0 12 12"><rect x="1.500" y="1.500" width="8" height="8" fill="#f4f4f4" stroke="#555"/><path d="M10.500 3v8h-8" fill="none" stroke="#333" stroke-width="1"/><rect x="2" y="6" width="4" height="4" fill="#333"/></svg>
  <svg class="abs" style="left:210px;top:172px" width="12" height="13" viewBox="0 0 12 13"><path d="M2.500 4.500h7l-.7 7.500h-5.600z" fill="#eee" stroke="#555"/><path d="M1.500 3.500h9M4 2h4M4.500 6v4.500M7.500 6v4.500M6 6v4.500" stroke="#555" fill="none"/></svg>
  <div class="abs grip" style="left:235px;top:175px;width:10px;height:10px;clip-path:polygon(100% 0,100% 100%,0 100%)"></div>
</div>
<svg class="abs" style="left:912px;top:121px" width="230" height="86" viewBox="0 0 230 86" shape-rendering="crispEdges">
<rect x="0" y="0" width="229" height="73" fill="#000"/><rect x="0" y="72" width="97" height="13" fill="#000"/>
<rect x="1" y="1" width="11" height="11" fill="#ff0000"/>
<rect x="13" y="1" width="11" height="11" fill="#ffff00"/>
<rect x="25" y="1" width="11" height="11" fill="#00ff00"/>
<rect x="37" y="1" width="11" height="11" fill="#00ffff"/>
<rect x="49" y="1" width="11" height="11" fill="#0000ff"/>
<rect x="61" y="1" width="11" height="11" fill="#ff00ff"/>
<rect x="73" y="1" width="11" height="11" fill="#ffffff"/>
<rect x="85" y="1" width="11" height="11" fill="#ebebeb"/>
<rect x="97" y="1" width="11" height="11" fill="#e1e1e1"/>
<rect x="109" y="1" width="11" height="11" fill="#d7d7d7"/>
<rect x="121" y="1" width="11" height="11" fill="#cccccc"/>
<rect x="133" y="1" width="11" height="11" fill="#c2c2c2"/>
<rect x="145" y="1" width="11" height="11" fill="#b7b7b7"/>
<rect x="157" y="1" width="11" height="11" fill="#acacac"/>
<rect x="169" y="1" width="11" height="11" fill="#a0a0a0"/>
<rect x="181" y="1" width="11" height="11" fill="#959595"/>
<rect x="193" y="1" width="11" height="11" fill="#e60012"/>
<rect x="205" y="1" width="11" height="11" fill="#fff100"/>
<rect x="217" y="1" width="11" height="11" fill="#009944"/>
<rect x="1" y="13" width="11" height="11" fill="#00a0e9"/>
<rect x="13" y="13" width="11" height="11" fill="#1d2088"/>
<rect x="25" y="13" width="11" height="11" fill="#e4007f"/>
<rect x="37" y="13" width="11" height="11" fill="#959595"/>
<rect x="49" y="13" width="11" height="11" fill="#898989"/>
<rect x="61" y="13" width="11" height="11" fill="#7d7d7d"/>
<rect x="73" y="13" width="11" height="11" fill="#707070"/>
<rect x="85" y="13" width="11" height="11" fill="#626262"/>
<rect x="97" y="13" width="11" height="11" fill="#555555"/>
<rect x="109" y="13" width="11" height="11" fill="#464646"/>
<rect x="121" y="13" width="11" height="11" fill="#363636"/>
<rect x="133" y="13" width="11" height="11" fill="#262626"/>
<rect x="145" y="13" width="11" height="11" fill="#000000"/>
<rect x="157" y="13" width="11" height="11" fill="#f29b76"/>
<rect x="169" y="13" width="11" height="11" fill="#f6b37f"/>
<rect x="181" y="13" width="11" height="11" fill="#facd89"/>
<rect x="193" y="13" width="11" height="11" fill="#fff799"/>
<rect x="205" y="13" width="11" height="11" fill="#cce198"/>
<rect x="217" y="13" width="11" height="11" fill="#acd598"/>
<rect x="1" y="25" width="11" height="11" fill="#89c997"/>
<rect x="13" y="25" width="11" height="11" fill="#84ccc9"/>
<rect x="25" y="25" width="11" height="11" fill="#7ecef4"/>
<rect x="37" y="25" width="11" height="11" fill="#88abda"/>
<rect x="49" y="25" width="11" height="11" fill="#8c97cb"/>
<rect x="61" y="25" width="11" height="11" fill="#8f82bc"/>
<rect x="73" y="25" width="11" height="11" fill="#aa89bd"/>
<rect x="85" y="25" width="11" height="11" fill="#c490bf"/>
<rect x="97" y="25" width="11" height="11" fill="#f19ec2"/>
<rect x="109" y="25" width="11" height="11" fill="#f29c9f"/>
<rect x="121" y="25" width="11" height="11" fill="#ec6941"/>
<rect x="133" y="25" width="11" height="11" fill="#f19149"/>
<rect x="145" y="25" width="11" height="11" fill="#f8b551"/>
<rect x="157" y="25" width="11" height="11" fill="#fff45c"/>
<rect x="169" y="25" width="11" height="11" fill="#b3d465"/>
<rect x="181" y="25" width="11" height="11" fill="#80c269"/>
<rect x="193" y="25" width="11" height="11" fill="#32b16c"/>
<rect x="205" y="25" width="11" height="11" fill="#13b5b1"/>
<rect x="217" y="25" width="11" height="11" fill="#00b7ee"/>
<rect x="1" y="37" width="11" height="11" fill="#448aca"/>
<rect x="13" y="37" width="11" height="11" fill="#556fb5"/>
<rect x="25" y="37" width="11" height="11" fill="#5f52a0"/>
<rect x="37" y="37" width="11" height="11" fill="#8957a1"/>
<rect x="49" y="37" width="11" height="11" fill="#ae5da1"/>
<rect x="61" y="37" width="11" height="11" fill="#ea68a2"/>
<rect x="73" y="37" width="11" height="11" fill="#eb6877"/>
<rect x="85" y="37" width="11" height="11" fill="#e60012"/>
<rect x="97" y="37" width="11" height="11" fill="#eb6100"/>
<rect x="109" y="37" width="11" height="11" fill="#f39800"/>
<rect x="121" y="37" width="11" height="11" fill="#fff100"/>
<rect x="133" y="37" width="11" height="11" fill="#8fc31f"/>
<rect x="145" y="37" width="11" height="11" fill="#22ac38"/>
<rect x="157" y="37" width="11" height="11" fill="#009944"/>
<rect x="169" y="37" width="11" height="11" fill="#009e96"/>
<rect x="181" y="37" width="11" height="11" fill="#00a0e9"/>
<rect x="193" y="37" width="11" height="11" fill="#0068b7"/>
<rect x="205" y="37" width="11" height="11" fill="#00479d"/>
<rect x="217" y="37" width="11" height="11" fill="#1d2088"/>
<rect x="1" y="49" width="11" height="11" fill="#601986"/>
<rect x="13" y="49" width="11" height="11" fill="#920783"/>
<rect x="25" y="49" width="11" height="11" fill="#e4007f"/>
<rect x="37" y="49" width="11" height="11" fill="#e5004f"/>
<rect x="49" y="49" width="11" height="11" fill="#a40000"/>
<rect x="61" y="49" width="11" height="11" fill="#a84200"/>
<rect x="73" y="49" width="11" height="11" fill="#ac6a00"/>
<rect x="85" y="49" width="11" height="11" fill="#b7aa00"/>
<rect x="97" y="49" width="11" height="11" fill="#638c0b"/>
<rect x="109" y="49" width="11" height="11" fill="#097c25"/>
<rect x="121" y="49" width="11" height="11" fill="#007130"/>
<rect x="133" y="49" width="11" height="11" fill="#00736d"/>
<rect x="145" y="49" width="11" height="11" fill="#0075a9"/>
<rect x="157" y="49" width="11" height="11" fill="#004986"/>
<rect x="169" y="49" width="11" height="11" fill="#002e73"/>
<rect x="181" y="49" width="11" height="11" fill="#100964"/>
<rect x="193" y="49" width="11" height="11" fill="#440062"/>
<rect x="205" y="49" width="11" height="11" fill="#6a005f"/>
<rect x="217" y="49" width="11" height="11" fill="#a4005b"/>
<rect x="1" y="61" width="11" height="11" fill="#a40035"/>
<rect x="13" y="61" width="11" height="11" fill="#7d0000"/>
<rect x="25" y="61" width="11" height="11" fill="#7f2d00"/>
<rect x="37" y="61" width="11" height="11" fill="#834e00"/>
<rect x="49" y="61" width="11" height="11" fill="#8a8000"/>
<rect x="61" y="61" width="11" height="11" fill="#486a00"/>
<rect x="73" y="61" width="11" height="11" fill="#005e15"/>
<rect x="85" y="61" width="11" height="11" fill="#005826"/>
<rect x="97" y="61" width="11" height="11" fill="#005752"/>
<rect x="109" y="61" width="11" height="11" fill="#005982"/>
<rect x="121" y="61" width="11" height="11" fill="#003567"/>
<rect x="133" y="61" width="11" height="11" fill="#001c58"/>
<rect x="145" y="61" width="11" height="11" fill="#03004c"/>
<rect x="157" y="61" width="11" height="11" fill="#32004b"/>
<rect x="169" y="61" width="11" height="11" fill="#500047"/>
<rect x="181" y="61" width="11" height="11" fill="#7e0043"/>
<rect x="193" y="61" width="11" height="11" fill="#7d0022"/>
<rect x="205" y="61" width="11" height="11" fill="#d9c6a5"/>
<rect x="217" y="61" width="11" height="11" fill="#a6937c"/>
<rect x="1" y="73" width="11" height="11" fill="#7e6b5a"/>
<rect x="13" y="73" width="11" height="11" fill="#59493f"/>
<rect x="25" y="73" width="11" height="11" fill="#362e2b"/>
<rect x="37" y="73" width="11" height="11" fill="#cfa972"/>
<rect x="49" y="73" width="11" height="11" fill="#b28850"/>
<rect x="61" y="73" width="11" height="11" fill="#996c33"/>
<rect x="73" y="73" width="11" height="11" fill="#81511c"/>
<rect x="85" y="73" width="11" height="11" fill="#6a3906"/>
</svg><!-- ===== CHARACTER PANEL ===== -->
<div class="abs panel" style="left:911px;top:293px;width:247px;height:248px">
  <div class="ptabs"><div class="ptab act" style="left:0;width:37px">字符</div><div class="ptab" style="left:37px;width:36px">段落</div>
    <svg class="abs" style="left:229px;top:5px" width="14" height="8" viewBox="0 0 14 8"><path d="M0 2h5l-2.500 3zM6 1h8M6 3.500h8M6 6h8" fill="#222" stroke="#222" stroke-width="1"/></svg>
  </div>
  <!-- font family -->
  <div class="fld" style="left:5px;top:22px;width:125px;height:21px"><span style="left:5px">宋体</span></div>
  <div class="fld" style="left:131px;top:23px;width:78px;height:21px"></div>
  <div class="hsep" style="left:4px;top:47px;width:205px"></div>
  <!-- row1 -->
  <div class="abs" style="left:8px;top:53px;font-family:'Liberation Serif',serif;font-weight:bold;color:#222;line-height:20px"><span style="font-size:11px;color:#8a8a8a">T</span><span style="font-size:17px;margin-left:-2px">T</span></div>
  <div class="fld" style="left:30px;top:52px;width:56px;height:21px"><span style="left:3px"><b>72 </b>点</span></div><div class="dd" style="left:86px;top:52px"></div>
  <svg class="abs" style="left:113px;top:52px" width="17" height="21" viewBox="0 0 17 21"><text x="10" y="9" font-size="9" font-weight="bold" text-anchor="middle" fill="#222" font-family="Liberation Sans,sans-serif">A</text><text x="10" y="19" font-size="9" font-weight="bold" text-anchor="middle" fill="#222" font-family="Liberation Sans,sans-serif">A</text><path d="M3.500 2v7M2 3.500l1.500-2l1.500 2M2 7.500l1.500 2l1.500-2M6 1.500h8M6 9.500h8" stroke="#222" fill="none" stroke-width="1"/></svg>
  <div class="fld" style="left:134px;top:52px;width:56px;height:21px"><span style="left:3px">(自动)</span></div><div class="dd" style="left:190px;top:52px"></div>
  <!-- row2 -->
  <svg class="abs" style="left:6px;top:77px" width="22" height="20" viewBox="0 0 22 20"><path d="M4.500 4v12M2.500 6l2-2.500l2 2.500M2.500 14l2 2.500l2-2.500" stroke="#222" fill="none" stroke-width="1.100"/><text x="13.500" y="16" font-size="17" font-weight="bold" text-anchor="middle" fill="#222" font-family="Liberation Serif,serif">T</text></svg>
  <div class="fld" style="left:30px;top:76px;width:56px;height:21px"><span style="left:3px"><b>100%</b></span></div>
  <svg class="abs" style="left:112px;top:77px" width="21" height="20" viewBox="0 0 21 20"><text x="10.500" y="13" font-size="17" font-weight="bold" text-anchor="middle" fill="#222" font-family="Liberation Serif,serif" transform="translate(-3.150 0) scale(1.300 1)">T</text><path d="M2 16.500h17M2 16.500l2-1.800v3.600zM19 16.500l-2-1.800v3.600z" stroke="#222" fill="#222" stroke-width="1"/></svg>
  <div class="fld" style="left:134px;top:76px;width:56px;height:21px"><span style="left:3px"><b>100%</b></span></div>
  <div class="hsep" style="left:4px;top:100px;width:205px"></div>
  <!-- row3 -->
  <svg class="abs" style="left:8px;top:105px" width="18" height="21" viewBox="0 0 18 21"><text x="8.500" y="11" font-size="10" text-anchor="middle" fill="#222" font-family="'Noto Sans CJK JP',sans-serif">あ</text><path d="M2.500 1v12M14.500 1v12" stroke="#222" stroke-dasharray="1 1" fill="none"/><path d="M1 17h5M11 17h5M6 17l-2-1.800v3.600zM11 17l2-1.800v3.600z" stroke="#222" fill="#222" stroke-width="1"/></svg>
  <div class="fld" style="left:30px;top:105px;width:56px;height:21px"><span style="left:3px"><b>0%</b></span></div><div class="dd" style="left:86px;top:105px"></div>
  <!-- row4 -->
  <svg class="abs" style="left:7px;top:130px" width="19" height="20" viewBox="0 0 19 20"><rect x="0" y="0" width="19" height="11" fill="#c0c0c0"/><text x="9.500" y="9.500" font-size="10" font-weight="bold" text-anchor="middle" fill="#111" font-family="Liberation Sans,sans-serif" letter-spacing="0.500">AV</text><path d="M2 16h15M2 16l2.500-2v4zM17 16l-2.500-2v4z" stroke="#222" fill="#222" stroke-width="1"/></svg>
  <div class="fld" style="left:30px;top:129px;width:56px;height:21px"><span style="left:3px"><b>0</b></span></div><div class="dd" style="left:86px;top:129px"></div>
  <svg class="abs" style="left:113px;top:128px" width="18" height="22" viewBox="0 0 18 22"><text x="5" y="17" font-size="11" text-anchor="middle" fill="#222" font-family="Liberation Sans,sans-serif">A</text><text x="12.500" y="13" font-size="11" text-anchor="middle" fill="#222" font-family="Liberation Sans,sans-serif">V</text><path d="M8.500 1v8M6 6.500l2.500 2.500l2.500-2.500M6 3.500l2.500-2.500l2.500 2.500" stroke="#222" fill="none" stroke-width="0.900"/></svg>
  <div class="fld dis" style="left:134px;top:129px;width:56px;height:21px"><span style="left:3px"><b>0</b></span></div><div class="dd" style="left:190px;top:129px"></div>
  <div class="hsep" style="left:4px;top:153px;width:205px"></div>
  <!-- row5 -->
  <svg class="abs" style="left:7px;top:158px" width="20" height="20" viewBox="0 0 20 20"><text x="1" y="13" font-size="11" fill="#222" font-family="Liberation Sans,sans-serif">A</text><text x="9.500" y="8.500" font-size="9" fill="#222" font-family="Liberation Sans,sans-serif" font-weight="bold">a</text><path d="M1 14.500h7M11.500 10v7M11.500 17.500M9.500 12.500l2-2.300l2 2.300" stroke="#222" fill="none" stroke-width="1"/></svg>
  <div class="fld" style="left:30px;top:158px;width:56px;height:21px"><span style="left:3px"><b>0 </b>点</span></div>
  <div class="abs" style="left:105px;top:162px;font-size:13px;line-height:18px;color:#000;letter-spacing:-0.5px">颜色:</div>
  <div class="abs" style="left:136px;top:159px;width:54px;height:19px;background:#fd0a22;border:1px solid #888"></div>
  <div class="hsep" style="left:4px;top:182px;width:205px"></div>
  <!-- row6 style buttons -->
  <div class="abs tsty" style="left:18px;font-weight:bold">T</div>
  <div class="abs tsty" style="left:39px;font-style:italic">T</div>
  <div class="abs tsty" style="left:65px;font-weight:bold;letter-spacing:1px">TT</div>
  <div class="abs tsty" style="left:89px;font-weight:bold">T<span style="font-size:10px">T</span></div>
  <div class="abs tsty" style="left:111px;font-weight:bold">T<span style="font-size:7px;position:relative;top:-6px">1</span></div>
  <div class="abs tsty" style="left:132px;font-weight:bold">T<span style="font-size:7px;position:relative;top:1px">1</span></div>
  <div class="abs tsty" style="left:163px;text-decoration:underline">T</div>
  <div class="abs tsty" style="left:184px;text-decoration:line-through">T</div>
  <div class="hsep" style="left:4px;top:212px;width:205px"></div>
  <!-- row7 -->
  <div class="fld" style="left:2px;top:220px;width:109px;height:21px"><span style="left:5px;top:2px">美国英语</span></div>
  <svg class="abs" style="left:95px;top:227px" width="10" height="7" viewBox="0 0 10 7"><path d="M1 1L5 5.500L9 1" fill="none" stroke="#333" stroke-width="1.100"/></svg>
  <div class="abs" style="left:121px;top:218px;font-family:'Liberation Serif',serif;color:#111;line-height:20px;font-size:15px;white-space:nowrap"><span style="font-size:12px;position:relative;top:-5px">a</span>a</div>
  <div class="fld" style="left:137px;top:220px;width:55px;height:21px"><span style="left:7px;top:2px">锐利</span></div>
  <svg class="abs" style="left:176px;top:227px" width="10" height="7" viewBox="0 0 10 7"><path d="M1 1L5 5.500L9 1" fill="none" stroke="#333" stroke-width="1.100"/></svg>
  <svg class="abs" style="left:118px;top:29px" width="10" height="7" viewBox="0 0 10 7"><path d="M1 1L5 5.500L9 1" fill="none" stroke="#333" stroke-width="1.100"/></svg>
</div>
<!-- ===== LAYERS PANEL ===== -->
<div class="abs panel" style="left:911px;top:545px;width:247px;height:191px">
  <div class="ptabs"><div class="ptab act" style="left:0;width:36px">图层</div><div class="ptab" style="left:36px;width:36px">通道</div><div class="ptab" style="left:72px;width:37px">路径</div>
    <svg class="abs" style="left:229px;top:5px" width="14" height="8" viewBox="0 0 14 8"><path d="M0 2h5l-2.500 3zM6 1h8M6 3.500h8M6 6h8" fill="#222" stroke="#222" stroke-width="1"/></svg>
  </div>
  <!-- blend row -->
  <div class="fld" style="left:4px;top:21px;width:122px;height:21px;font-size:13px"><span style="left:6px">正常</span></div>
  <svg class="abs" style="left:111px;top:28px" width="10" height="7" viewBox="0 0 10 7"><path d="M1 1L5 5.500L9 1" fill="none" stroke="#333" stroke-width="1.100"/></svg>
  <div class="abs" style="left:129px;top:21px;font-size:13px;line-height:20px;letter-spacing:-0.6px;white-space:nowrap">不透明度:</div>
  <div class="fld" style="left:184px;top:22px;width:42px;height:17px"><span style="left:3px;line-height:15px"><b>100%</b></span></div>
  <div class="abtn" style="left:226px;top:22px"></div>
  <div class="hsep" style="left:2px;top:43px;width:241px"></div>
  <!-- lock row -->
  <div class="abs" style="left:6px;top:49px;font-size:13px;line-height:18px;letter-spacing:-0.6px;white-space:nowrap">锁定:</div>
  <svg class="abs" style="left:41px;top:51px" width="70" height="13" viewBox="0 0 70 13"><rect x=".5" y=".5" width="10" height="10" fill="#eee" stroke="#777"/><path d="M1 1h3v3h-3zM7 1h3v3h-3zM4 4h3v3h-3zM1 7h3v3h-3zM7 7h3v3h-3z" fill="#aaa"/><path d="M31 .5l-6 6.500" stroke="#333" stroke-width="1.500"/><path d="M19 12c2 0 6-1 7-4l-2-1.500c-1 2.500-3 4-5 5.500z" fill="#333"/><path d="M43.500 0v12M37.500 6h12M43.500 0l-2 2.500h4zM43.500 12l-2-2.500h4zM37.500 6l2.500-2v4zM49.500 6l-2.500-2v4z" stroke="#222" fill="#222" stroke-width="1"/><rect x="56" y="5" width="9" height="7" fill="#333"/><path d="M58 5v-2a2.500 2.500 0 0 1 5 0v2" fill="none" stroke="#333" stroke-width="1.500"/></svg>
  <div class="abs" style="left:152px;top:49px;font-size:13px;line-height:18px;letter-spacing:-0.6px;white-space:nowrap">填充:</div>
  <div class="fld" style="left:184px;top:49px;width:42px;height:17px"><span style="left:3px;line-height:15px"><b>100%</b></span></div>
  <div class="abtn" style="left:226px;top:49px"></div>
  <!-- list -->
  <div class="abs" style="left:2px;top:71px;width:228px;height:101px;border-top:1px solid #8a8a8a;border-bottom:1px solid #8a8a8a;overflow:hidden">
    <div class="abs" style="left:22px;top:0;width:1px;height:100px;background:#a8a8a8"></div>
    <!-- layer 1 -->
    <div class="abs" style="left:23px;top:0;width:205px;height:38px;background:#0078d7"></div>
    <div class="abs" style="left:3px;top:10px;width:17px;height:17px;border:1px solid #a0a0a0;background:#cfcfcf"></div>
    <svg class="abs" style="left:5px;top:14px" width="14" height="10" viewBox="0 0 14 10"><path d="M.5 5c3-5 10-5 13 0c-3 4.500-10 4.500-13 0z" fill="#eee" stroke="#222" stroke-width="1"/><circle cx="7" cy="4.800" r="2.800" fill="#111"/></svg>
    <div class="abs" style="left:25px;top:1px;width:35px;height:35px;background:#fff;border:1px solid #000;box-shadow:inset 0 0 0 1px #fff, inset 0 0 0 2px #000"></div>
    <div class="abs" style="left:25px;top:7px;width:35px;text-align:center;font-family:'Liberation Serif',serif;font-size:22px;line-height:26px;color:#444">T</div>
    <div class="abs" style="left:64px;top:12px;font-size:12px;line-height:16px;color:#fff;white-space:nowrap">宇宙少莫千华无限公司</div>
    <!-- layer 2 -->
    <div class="abs" style="left:23px;top:38px;width:205px;height:1px;background:#b8b8b8"></div>
    <div class="abs" style="left:3px;top:50px;width:16px;height:16px;border:1px solid #a6a6a6;background:#d2d2d2"></div>
    <div class="abs" style="left:25px;top:41px;width:33px;height:33px;background:#fff;border:1px solid #000"></div>
    <div class="abs" style="left:26px;top:42px;width:31px;height:21px;background:#fd0a22"></div>
    <svg class="abs" style="left:26px;top:63px" width="31" height="10" viewBox="0 0 31 10"><path d="M0 .5h31" stroke="#000"/><path d="M4 5.500h23" stroke="#000"/><path d="M15.500 5.500l-3 3.500h6z" fill="#000"/></svg>
    <svg class="abs" style="left:60px;top:50px" width="9" height="16" viewBox="0 0 9 16"><rect x="1.500" y="1" width="6" height="8" rx="3" fill="#eee" stroke="#444" stroke-width="1.200"/><rect x="1.500" y="7" width="6" height="8" rx="3" fill="none" stroke="#444" stroke-width="1.200"/><path d="M4.500 5v6" stroke="#444" stroke-width="1.400"/></svg>
    <div class="abs" style="left:72px;top:41px;width:33px;height:33px;background:#808080;border:1px solid #111"></div>
    <div class="abs" style="left:76px;top:48px;width:11px;height:11px;border-radius:50%;background:#fff;border:1px solid #111"></div>
    <div class="abs" style="left:112px;top:50px;font-size:13px;line-height:18px;white-space:nowrap;letter-spacing:-0.5px">形状 <span style="font-family:'Liberation Serif',serif">1</span></div>
    <div class="abs" style="left:199px;top:47px;font-family:'Liberation Serif',serif;font-style:italic;font-weight:bold;font-size:15px;line-height:20px;color:#333;letter-spacing:-0.5px">fx</div>
    <div class="abs" style="left:217px;top:38px;width:1px;height:39px;background:#c2c2c2"></div>
    <div class="abs" style="left:220px;top:54px;width:0;height:0;border:4px solid transparent;border-bottom:5px solid #333;border-top:0"></div>
    <!-- effects -->
    <svg class="abs" style="left:42px;top:81px" width="14" height="10" viewBox="0 0 14 10"><path d="M.5 5c3-5 10-5 13 0c-3 4.500-10 4.500-13 0z" fill="#e4e4e4" stroke="#777" stroke-width="1"/><circle cx="7" cy="4.800" r="2.600" fill="#666"/></svg>
    <div class="abs" style="left:58px;top:78px;font-size:13px;line-height:18px;white-space:nowrap;letter-spacing:-0.5px">效果</div>
    <div class="abs" style="left:56px;top:96px;width:172px;height:1px;background:#555"></div>
    <div class="abs" style="left:79px;top:96px;font-size:13px;line-height:18px;white-space:nowrap;letter-spacing:-0.5px">描边</div>
  </div>
  <!-- scrollbar -->
  <div class="abs" style="left:230px;top:72px;width:16px;height:100px;background:#f0f0f0"></div>
  <div class="abs" style="left:230px;top:88px;width:16px;height:44px;background:#cdcdcd"></div>
  <svg class="abs" style="left:233px;top:75px" width="10" height="7" viewBox="0 0 10 7"><path d="M1 6L5 1.500L9 6" fill="none" stroke="#444" stroke-width="1.600"/></svg>
  <svg class="abs" style="left:233px;top:163px" width="10" height="7" viewBox="0 0 10 7"><path d="M1 1L5 5.500L9 1" fill="none" stroke="#444" stroke-width="1.600"/></svg>
  <!-- footer icons -->
  <svg class="abs" style="left:44px;top:175px" width="182" height="14" viewBox="0 0 182 14" fill="none" stroke="#444" stroke-width="1.200">
    <rect x="1" y="4" width="9" height="6" rx="3" fill="#eee"/><rect x="9" y="4" width="9" height="6" rx="3" fill="#eee"/><path d="M6 7h8" stroke-width="1.500"/>
    <text x="30" y="11.500" font-family="Liberation Serif,serif" font-style="italic" font-weight="bold" font-size="14.500" fill="#333" stroke="none" letter-spacing="-0.500">fx</text><path d="M47 11h3l-1.500 2z" fill="#222" stroke="none"/>
    <rect x="58.500" y="1.500" width="13" height="11" fill="#999" stroke="#333" stroke-width="1"/><circle cx="65" cy="7" r="3.500" fill="#fff" stroke="#333" stroke-width="1"/>
    <circle cx="92.500" cy="7" r="5.500" fill="#f4f4f4" stroke="#333"/><path d="M88.600 10.900A5.500 5.500 0 0 1 96.400 3.100Z" fill="#333" stroke="none"/><path d="M99 11h3l-1.500 2z" fill="#222" stroke="none"/>
    <path d="M113.500 3.500h3.500l1 1.500h7v6.500h-11.500z" fill="#f4f4f4" stroke="#555" stroke-width="1"/>
    <rect x="141.500" y="3.500" width="8" height="8" fill="#f4f4f4" stroke="#555" stroke-width="1"/><path d="M150.500 5v7.500h-7.500" stroke="#333" stroke-width="1"/><rect x="142" y="8" width="3.500" height="3.500" fill="#333" stroke="none"/>
    <path d="M170.500 4.500h7l-.7 7.500h-5.600z" fill="#eee" stroke="#444" stroke-width="1"/><path d="M169.500 3.500h9M172 2h4M172.500 6v4.500M175.500 6v4.500M174 6v4.500" stroke="#444" stroke-width="1"/>
  </svg>
</div>
<!-- window frame -->
<div class="abs" style="left:1158px;top:91px;width:1px;height:646px;background:#4a4a4a"></div>
<div class="abs" style="left:1159px;top:34px;width:4px;height:707px;background:#d6d6d6"></div>
<div class="abs" style="left:0;top:737px;width:1163px;height:1px;background:#f4f4f4"></div>
<div class="abs" style="left:0;top:739px;width:1163px;height:2px;background:#b0b0b0"></div>
<div class="abs" style="left:1160px;top:6px;width:1px;height:733px;background:#f4f4f4"></div>
<div class="abs" style="left:1161px;top:6px;width:2px;height:735px;background:#ababab"></div>
<div class="abs" style="left:0;top:5px;width:1px;height:736px;background:#a0a0a0"></div>
<div class="abs" style="left:1px;top:5px;width:1px;height:733px;background:#f4f4f4"></div>
<div class="abs" style="left:5px;top:0;width:1151px;height:1px;background:#a0a0a0"></div>
<div class="abs" style="left:5px;top:1px;width:1151px;height:1px;background:#f4f4f4"></div>
<svg class="abs" style="left:0;top:0" width="6" height="6" viewBox="0 0 6 6"><path d="M0 0H6V.5A5.500 5.500 0 0 0 .5 6H0Z" fill="#fff"/><path d="M.5 6A5.500 5.500 0 0 1 6 .5" fill="none" stroke="#a0a0a0"/><path d="M1.500 6A4.500 4.500 0 0 1 6 1.500" fill="none" stroke="#f4f4f4"/></svg>
<svg class="abs" style="left:1156px;top:0" width="7" height="7" viewBox="0 0 7 7"><path d="M7 0H0V.5A5.500 5.500 0 0 1 5.500 6V7H7Z" fill="#fff"/><path d="M0 .5A5.500 5.500 0 0 1 5.500 6" fill="none" stroke="#a0a0a0"/><path d="M0 1.500A4.500 4.500 0 0 1 4.500 6" fill="none" stroke="#f4f4f4"/><path d="M5.500 6V7H7V6" fill="#ababab"/></svg>

<!-- ===== ANNOTATIONS ===== -->
<div class="tip" style="left:213px;top:165px;width:514px;height:56px;padding:6px 0 0 6px;line-height:23px">将鼠标放置到对应的路径上，直到出现相应的<br>鼠标指针，按下鼠标左键进行拖拽，拖拽到合适显示角度、显示范围等</div>
<div class="tiparrow" style="left:207px;top:176px"></div>
<div class="badge" style="left:184px;top:172px">3</div>

<div class="tip" style="left:43px;top:511px;width:114px;height:34px;padding:5px 0 0 6px;line-height:24px">选择路径工具</div>
<div class="tiparrow" style="left:37px;top:522px"></div>
<div class="badge" style="left:14px;top:518px">2</div>

<div class="tip" style="left:943px;top:598px;width:113px;height:33px;padding:5px 0 0 5px;line-height:24px;background:rgba(52,52,52,0.820)">选中文字图层</div>
<div class="tiparrow" style="left:937px;top:609px;border-right-color:rgba(52,52,52,0.820)"></div>
<div class="badge" style="left:913px;top:605px">1</div>
<!-- IME toolbar -->
<div class="abs" style="left:1040px;top:319px;width:123px;height:22px;background:#fff"></div>
<svg class="abs" style="left:1033px;top:313px" width="30" height="32" viewBox="0 0 30 32"><path d="M4 5l20-3c2 0 3 1 3 3l1 20c0 2-1 3-3 3l-18 2c-2 0-3-1-3-3l-2-19c0-2 .5-3 2-3z" fill="#f4601e"/><path d="M23.500 9.500c-6-3.500-16-2-15.500 2.500c.5 4 14.500 1.500 14.500 7c0 5-11 5.500-17 2" fill="none" stroke="#fff" stroke-width="3.600" stroke-linecap="round"/></svg>
<div class="abs" style="left:1066px;top:319px;font-size:16px;line-height:20px;font-weight:bold;color:#1e78d2">英</div>
<div class="abs" style="left:1090px;top:317px;font-size:15px;line-height:20px;font-weight:bold;color:#1e78d2;letter-spacing:1px">·,</div>
<svg class="abs" style="left:1110px;top:320px" width="53" height="19" viewBox="0 0 53 19" fill="none" stroke="#1e78d2" stroke-width="1.700"><circle cx="9" cy="9.500" r="7"/><path d="M5.500 11c1.500 3 5.500 3 7 0" stroke-width="1.500"/><path d="M6.500 6v2.500M11.500 6v2.500" stroke-width="1.600"/><rect x="27" y="2" width="5" height="9" rx="2.500" fill="#1e78d2"/><path d="M24.500 8.500c0 7 10 7 10 0M29.500 14v3.500M26.500 17.500h6" stroke-width="1.500"/><rect x="44" y="3" width="14" height="13" rx="1.500"/><path d="M47 7h2M51 7h2M47 11h2M51 11h2" stroke-width="2"/></svg>
</div>
</body>
</html>
